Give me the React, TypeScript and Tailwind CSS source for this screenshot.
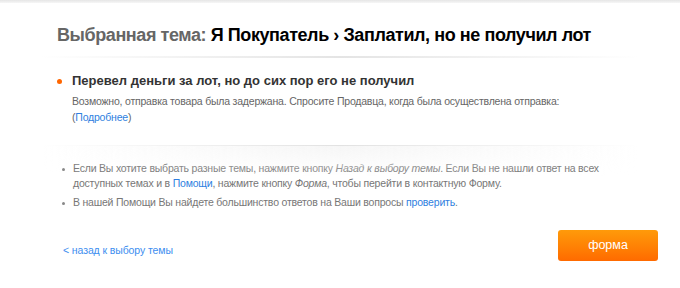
import React from "react";

export default function App() {
  return (
    <div className="w-[680px] h-[288px] bg-white overflow-hidden" style={{ fontFamily: '"Liberation Sans", Arial, sans-serif' }}>
      <div className="h-[3px] bg-gradient-to-b from-[#e6e6e6] to-[#f6f6f6]" />
      <div className="px-[57px]">
        <h1 className="pt-[21px] text-[18px] font-bold leading-[22px] text-black tracking-[-0.42px]">
          <span className="text-[#666]">Выбранная тема: </span>Я Покупатель › Заплатил, но не получил лот
        </h1>
      </div>
      <div className="mt-[10px] mx-[40px] h-[2px] bg-gradient-to-r from-transparent via-[#e4e4e4] to-transparent" />
      <div className="px-[57px] pt-[15px]">
        <div className="flex items-start">
          <span className="mt-[6px] w-[5px] h-[5px] rounded-full bg-[#ff6600] shrink-0" />
          <div className="ml-[10px]">
            <div className="text-[13px] font-bold leading-[16px] text-[#333]">Перевел деньги за лот, но до сих пор его не получил</div>
            <div className="mt-[4px] text-[10.5px] tracking-[-0.2px] leading-[16px] text-[#666] whitespace-nowrap">
              Возможно, отправка товара была задержана. Спросите Продавца, когда была осуществлена отправка:
              <br />(<a className="text-[#2f7fe0]">Подробнее</a>)
            </div>
          </div>
        </div>
      </div>
      <div className="mt-[20px] mx-[40px]">
        <div className="h-px bg-gradient-to-r from-transparent via-[#e2e2e2] to-transparent" />
        <div className="h-[30px] bg-gradient-to-r from-transparent via-[#f6f6f6] to-transparent [mask-image:linear-gradient(to_bottom,black,transparent)]" />
      </div>
      <ul className="-mt-[15px] pl-[62px] pr-[40px] text-[10.5px] tracking-[-0.2px] leading-[15px] text-[#777]">
        <li className="flex">
          <span className="mt-[7px] w-[3px] h-[3px] rounded-full bg-[#888] shrink-0" />
          <span className="ml-[8px]">
            Если Вы хотите выбрать разные темы, нажмите кнопку <i>Назад к выбору темы</i>. Если Вы не нашли ответ на всех доступных темах и в <a className="text-[#2f7fe0]">Помощи</a>, нажмите кнопку <i>Форма</i>, чтобы перейти в контактную Форму.
          </span>
        </li>
        <li className="flex mt-[4px]">
          <span className="mt-[7px] w-[3px] h-[3px] rounded-full bg-[#888] shrink-0" />
          <span className="ml-[8px]">
            В нашей Помощи Вы найдете большинство ответов на Ваши вопросы <a className="text-[#2f7fe0]">проверить</a>.
          </span>
        </li>
      </ul>
      <div className="mt-[20px] pl-[63px] pr-[22px] flex items-start justify-between">
        <a className="mt-[13px] text-[10.5px] tracking-[-0.1px] leading-[14px] text-[#3d8ef0]">&lt; назад к выбору темы</a>
        <button className="w-[100px] h-[31px] rounded-[3px] bg-gradient-to-b from-[#ff9a0a] to-[#ff6a00] text-white text-[12.5px]">форма</button>
      </div>
    </div>
  );
}
